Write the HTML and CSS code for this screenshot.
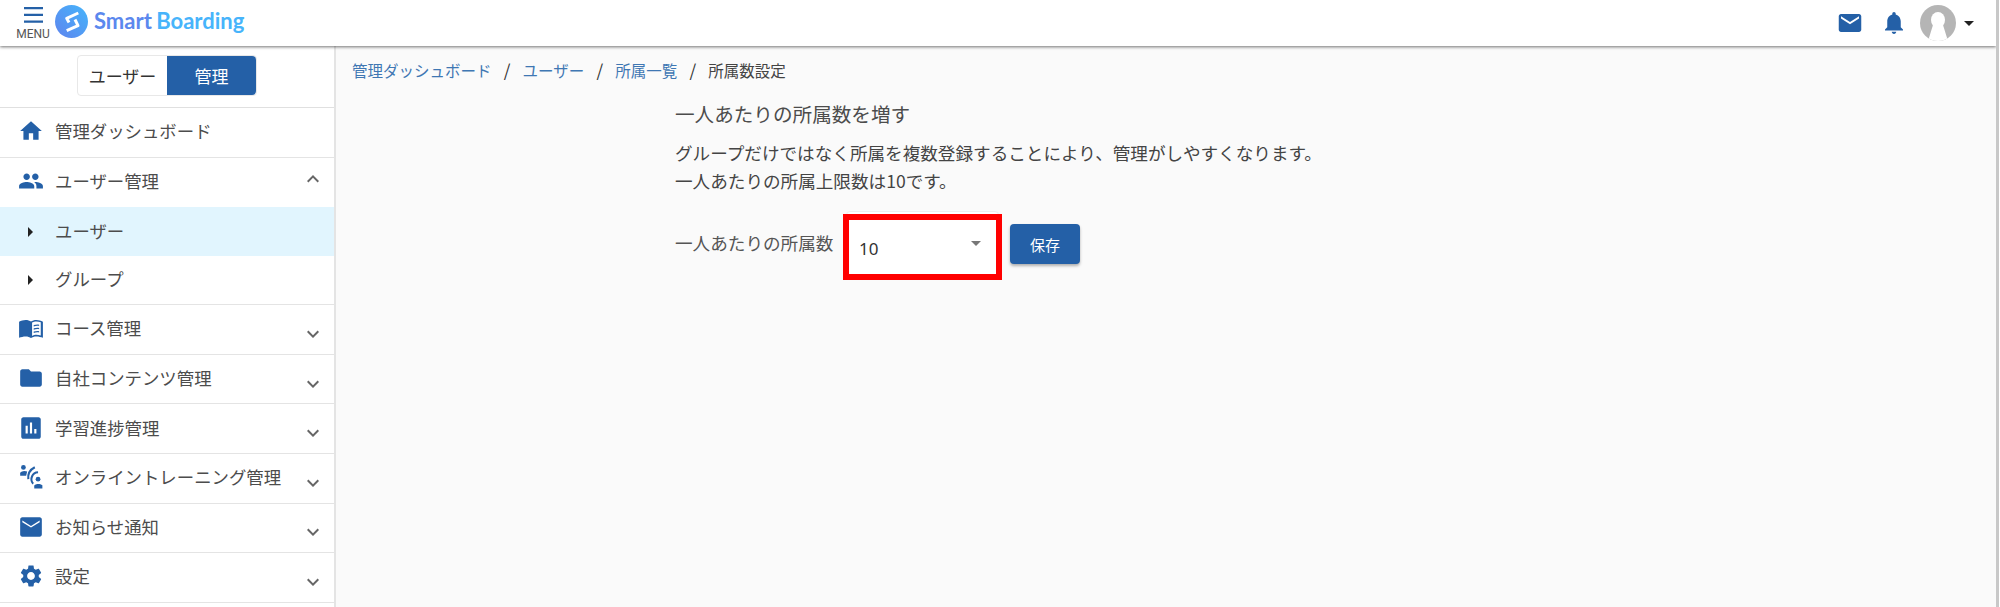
FILE: index.html
```html
<!DOCTYPE html>
<html lang="ja">
<head>
<meta charset="utf-8">
<title>所属数設定</title>
<link rel="stylesheet" href="styles.css">
</head>
<body>
<header class="topbar">
  <div class="menu">
    <svg class="menu-icon" viewBox="0 0 19 16"><path d="M0 0h19v2.200H0zM0 6.800h19v2.200H0zM0 13.600h19v2.200H0z"/></svg>
    <span class="menu-label">MENU</span>
  </div>
  <svg class="logo-mark" viewBox="0 0 33 33">
    <defs><linearGradient id="lg" x1="0" y1="1" x2="1" y2="0"><stop offset="0" stop-color="#5f84ee"/><stop offset="1" stop-color="#45b5fb"/></linearGradient></defs>
    <circle cx="16.500" cy="16.500" r="16.500" fill="url(#lg)"/>
    <path d="M23.300 8 11.700 13.300 14 17.500M20 14.500 23 20.700 11.700 25.700" fill="none" stroke="#fff" stroke-width="3" stroke-linecap="butt" stroke-linejoin="round"/>
  </svg>
  <div class="logo-text"><span class="logo-a">Smart</span> <span class="logo-b">Boarding</span></div>
  <div class="top-actions">
    <svg class="top-mail" viewBox="2 4 20 16"><path d="M20 4H4c-1.100 0-1.990.9-1.990 2L2 18c0 1.100.9 2 2 2h16c1.100 0 2-.9 2-2V6c0-1.100-.9-2-2-2zm0 4l-8 5-8-5V6l8 5 8-5v2z"/></svg>
    <svg class="top-bell" viewBox="4 2.500 16 19.500"><path d="M12 22c1.100 0 2-.9 2-2h-4c0 1.100.89 2 2 2zm6-6v-5c0-3.070-1.640-5.640-4.500-6.320V4c0-.83-.67-1.500-1.500-1.500s-1.500.67-1.500 1.500v.68C7.630 5.360 6 7.920 6 11v5l-2 2v1h16v-1l-2-2z"/></svg>
    <svg class="avatar" viewBox="0 0 36 36">
      <defs><clipPath id="av"><circle cx="18" cy="18" r="18"/></clipPath></defs>
      <circle cx="18" cy="18" r="18" fill="#b5b5b5"/>
      <g clip-path="url(#av)" fill="#fff"><ellipse cx="18" cy="15" rx="7" ry="8"/><path d="M13 20c-2 6-3 10-5 16h20c-2-6-3-10-5-16z"/></g>
    </svg>
    <span class="caret"></span>
  </div>
</header>
<div class="body-row">
  <aside class="sidebar">
    <div class="toggle-wrap">
      <div class="toggle"><span class="toggle-off">ユーザー</span><span class="toggle-on">管理</span></div>
    </div>
    <nav class="nav">
      <div class="row row-first">
        <svg class="ico" viewBox="0 0 24 24"><path d="M10 20v-6h4v6h5v-8h3L12 3 2 12h3v8z"/></svg>
        <span class="row-text">管理ダッシュボード</span>
      </div>
      <div class="row row-open">
        <svg class="ico" viewBox="0 0 24 24"><path d="M16 11c1.660 0 2.990-1.340 2.990-3S17.660 5 16 5c-1.660 0-3 1.340-3 3s1.340 3 3 3zm-8 0c1.660 0 2.990-1.340 2.990-3S9.660 5 8 5C6.340 5 5 6.340 5 8s1.340 3 3 3zm0 2c-2.330 0-7 1.170-7 3.500V19h14v-2.500c0-2.330-4.670-3.500-7-3.500zm8 0c-.29 0-.62.02-.97.05 1.160.84 1.970 1.970 1.970 3.450V19h6v-2.500c0-2.330-4.670-3.500-7-3.500z"/></svg>
        <span class="row-text">ユーザー管理</span>
        <svg class="chev chev-up" viewBox="0 0 24 24"><path d="M7.410 15.410 12 10.830l4.590 4.580L18 14l-6-6-6 6z"/></svg>
      </div>
      <div class="sub sub-active"><span class="tri"></span><span class="row-text">ユーザー</span></div>
      <div class="sub sub-last"><span class="tri"></span><span class="row-text">グループ</span></div>
      <div class="row">
        <svg class="ico" viewBox="0 0 24 24"><path d="M23 6.200c-1.600-1-4-1.700-6-1.700-2 0-3.900.5-5 1.500-1.100-1-3-1.500-5-1.500-2 0-4.400.7-6 1.700v14.900c1.700-.8 4-1.300 6-1.300 2 0 3.900.5 5 1.500 1.100-1 3-1.500 5-1.500 2 0 4.300.5 6 1.300z"/><path fill="#fff" d="M13 7c1-.7 2.600-1.100 4-1.100 1.400 0 2.800.2 4 .7V19c-1.200-.5-2.600-.7-4-.7-1.400 0-3 .4-4 1z"/><path d="M14.500 9.300c1.900-.7 3.900-.8 5-.4v1.300c-1.300-.4-3.200-.3-5 .4zm0 3c1.900-.7 3.900-.8 5-.4v1.300c-1.300-.4-3.200-.3-5 .4zm0 3c1.900-.7 3.900-.8 5-.4v1.300c-1.300-.4-3.200-.3-5 .4z"/></svg>
        <span class="row-text">コース管理</span>
        <svg class="chev chev-down" viewBox="0 0 24 24"><path d="M7.410 8.590 12 13.170l4.590-4.580L18 10l-6 6-6-6z"/></svg>
      </div>
      <div class="row">
        <svg class="ico" viewBox="0 0 24 24"><path d="M10 4H4c-1.100 0-1.990.9-1.990 2L2 18c0 1.100.9 2 2 2h16c1.100 0 2-.9 2-2V8c0-1.100-.9-2-2-2h-8l-2-2z"/></svg>
        <span class="row-text">自社コンテンツ管理</span>
        <svg class="chev chev-down" viewBox="0 0 24 24"><path d="M7.410 8.590 12 13.170l4.590-4.580L18 10l-6 6-6-6z"/></svg>
      </div>
      <div class="row">
        <svg class="ico" viewBox="0 0 24 24"><path d="M19 2H5c-1.100 0-2 .9-2 2v16c0 1.100.9 2 2 2h14c1.100 0 2-.9 2-2V4c0-1.100-.9-2-2-2zM9 17H7v-7h2v7zm4 0h-2V7h2v10zm4 0h-2v-4h2v4z"/></svg>
        <span class="row-text">学習進捗管理</span>
        <svg class="chev chev-down" viewBox="0 0 24 24"><path d="M7.410 8.590 12 13.170l4.590-4.580L18 10l-6 6-6-6z"/></svg>
      </div>
      <div class="row">
        <svg class="ico" viewBox="0 0 24 24"><circle cx="5" cy="3.200" r="2.200"/><path d="M2 10.800V8.500c0-1 2-2 4-2 .9 0 1.800.2 2.500.5l-1 3.800z"/><circle cx="18.500" cy="14" r="2.200"/><path d="M15 22.500v-1.800c-.5-1 1.500-2.200 3.500-2.200 1.500 0 3 .4 4 1.100v2.900z"/><path fill="none" stroke="#2460a7" stroke-width="1.900" d="M18.500 7.700A6.300 6.300 0 0 0 14 18.200M15.500 3A11 11 0 0 0 9.500 14"/></svg>
        <span class="row-text">オンライントレーニング管理</span>
        <svg class="chev chev-down" viewBox="0 0 24 24"><path d="M7.410 8.590 12 13.170l4.590-4.580L18 10l-6 6-6-6z"/></svg>
      </div>
      <div class="row">
        <svg class="ico" viewBox="0 0 24 24"><path d="M20 3H4c-1.100 0-1.990.9-1.990 2L2 19c0 1.100.9 2 2 2h16c1.100 0 2-.9 2-2V5c0-1.100-.9-2-2-2zm0 4.500-8 5-8-5V6l8 5 8-5z"/></svg>
        <span class="row-text">お知らせ通知</span>
        <svg class="chev chev-down" viewBox="0 0 24 24"><path d="M7.410 8.590 12 13.170l4.590-4.580L18 10l-6 6-6-6z"/></svg>
      </div>
      <div class="row">
        <svg class="ico" viewBox="0 0 24 24"><path d="M19.140 12.940c.04-.3.060-.61.060-.94 0-.32-.02-.64-.07-.94l2.030-1.580c.18-.14.23-.41.120-.61l-1.920-3.320c-.12-.22-.37-.29-.59-.22l-2.390.96c-.5-.38-1.030-.7-1.620-.94l-.36-2.540c-.04-.24-.24-.41-.48-.41h-3.840c-.24 0-.43.17-.47.41l-.36 2.540c-.59.24-1.130.57-1.620.94l-2.390-.96c-.22-.08-.47 0-.59.22L2.740 8.870c-.12.21-.08.47.12.61l2.030 1.580c-.05.3-.09.63-.09.94s.02.64.07.94l-2.030 1.580c-.18.14-.23.41-.12.61l1.920 3.320c.12.22.37.29.59.22l2.390-.96c.5.38 1.030.7 1.620.94l.36 2.540c.05.24.24.41.48.41h3.840c.24 0 .44-.17.47-.41l.36-2.540c.59-.24 1.130-.56 1.620-.94l2.390.96c.22.08.47 0 .59-.22l1.920-3.320c.12-.22.07-.47-.12-.61l-2.010-1.580zM12 15.600c-1.980 0-3.600-1.620-3.600-3.600s1.620-3.600 3.600-3.600 3.600 1.620 3.600 3.600-1.620 3.600-3.600 3.600z"/></svg>
        <span class="row-text">設定</span>
        <svg class="chev chev-down" viewBox="0 0 24 24"><path d="M7.410 8.590 12 13.170l4.590-4.580L18 10l-6 6-6-6z"/></svg>
      </div>
    </nav>
  </aside>
  <main class="main">
    <div class="crumbs">
      <a class="crumb-link">管理ダッシュボード</a><span class="crumb-sep">/</span>
      <a class="crumb-link">ユーザー</a><span class="crumb-sep">/</span>
      <a class="crumb-link">所属一覧</a><span class="crumb-sep">/</span>
      <span class="crumb-now">所属数設定</span>
    </div>
    <section class="panel">
      <h1 class="title">一人あたりの所属数を増す</h1>
      <p class="desc">グループだけではなく所属を複数登録することにより、管理がしやすくなります。<br>一人あたりの所属上限数は10です。</p>
      <div class="form-row">
        <span class="field-label">一人あたりの所属数</span>
        <div class="select"><span class="select-value">10</span><span class="select-arrow"></span><span class="annot"></span></div>
        <button class="save" type="button">保存</button>
      </div>
    </section>
  </main>
</div>
</body>
</html>
```
FILE: styles.css
```css
* { box-sizing: border-box; }
html { background: #fff; }
html, body { margin: 0; height: 607px; overflow: hidden; }
body {
  width: 1999px;
  border-right: 3px solid #c8c8c8;
  font-family: "Noto Sans CJK JP", "Noto Sans", sans-serif;
  font-size: 17.400px;
  color: #444;
  background: #fafafa;
  display: flex;
  flex-direction: column;
}
.topbar {
  height: 46px;
  flex: none;
  background: #fff;
  display: flex;
  align-items: center;
  padding: 0 22px 0 17px;
  box-shadow: 0 1px 3px rgba(0,0,0,.55);
  position: relative;
  z-index: 2;
}
.menu { width: 32px; display: flex; flex-direction: column; align-items: center; margin-top: 1px; }
.menu-icon { width: 19px; height: 16px; fill: #2460a7; }
.menu-label { font: 12px/13px "Roboto", sans-serif; color: #555; margin-top: 5px; }
.logo-mark { width: 33px; height: 33px; margin: 0 0 4px 6px; }
.logo-text { font: 700 22px/30px "Lato", sans-serif; margin-left: 6px; margin-bottom: 4px; white-space: nowrap; word-spacing: -1px; }
.logo-a { color: #5b88ee; }
.logo-b { color: #47b4fb; }
.top-actions { margin-left: auto; display: flex; align-items: center; }
.top-mail { width: 24px; height: 18px; fill: #2460a7; margin-right: 23px; }
.top-bell { width: 18px; height: 22px; fill: #2460a7; margin-right: 17px; }
.avatar { width: 36px; height: 36px; margin-right: 8px; }
.caret { width: 0; height: 0; border-left: 5.500px solid transparent; border-right: 5.500px solid transparent; border-top: 5.500px solid #222; }
.body-row { flex: 1; display: flex; min-height: 0; }
.sidebar { width: 336px; flex: none; background: #fff; border-right: 2px solid #e4e4e4; }
.toggle-wrap { height: 62px; padding-top: 9px; display: flex; justify-content: center; border-bottom: 1px solid #e0e0e0; }
.toggle { width: 180px; height: 41px; border: 1px solid #e8e8e8; border-radius: 4px; display: flex; font-size: 17px; }
.toggle-off { width: 89px; display: flex; align-items: center; justify-content: center; color: #333; }
.toggle-on { flex: 1; display: flex; align-items: center; justify-content: center; background: #2460a7; color: #fff; border-radius: 0 4px 4px 0; }
.row {
  height: 49.600px;
  display: flex;
  align-items: center;
  padding: 0 9px 0 18px;
  border-bottom: 1.500px solid #e4e4e4;
  position: relative;
}
.row-open { border-bottom: 0; }
.ico { width: 26px; height: 26px; fill: #2460a7; flex: none; margin-top: -2px; }
.row-text { margin-left: 11px; margin-top: -3px; color: #4c4c4c; white-space: nowrap; }
.chev { width: 24px; height: 24px; fill: #666; margin-left: auto; flex: none; }
.chev-up { margin-top: -6px; }
.chev-down { margin-top: 9px; }
.sub { height: 49px; display: flex; align-items: center; padding-left: 28px; }
.sub-active { background: #e1f5fe; }
.sub-last { border-bottom: 1.500px solid #e4e4e4; }
.tri { width: 0; height: 0; border-top: 5.500px solid transparent; border-bottom: 5.500px solid transparent; border-left: 5.500px solid #222; flex: none; }
.sub .row-text { margin-left: 22px; }
.main { flex: 1; min-width: 0; background: #fafafa; }
.crumbs { display: flex; align-items: center; padding: 13px 0 0 16px; font-size: 15.500px; line-height: 22px; }
.crumb-link { color: #3f77b3; }
.crumb-sep { width: 31px; text-align: center; color: #333; font-size: 17px; }
.crumb-now { color: #444; }
.panel { margin-left: 339px; margin-top: 20px; }
.title { font-size: 19.600px; font-weight: 400; line-height: 26px; margin: 0; color: #4c4c4c; }
.desc { margin: 12px 0 0; font-size: 17.600px; line-height: 28px; color: #444; }
.form-row { display: flex; align-items: flex-start; margin-top: 16px; }
.field-label { font-size: 17.600px; color: #555; margin-top: 20px; line-height: 24px; width: 171px; flex: none; }
.select { width: 153px; height: 66px; background: #fff; border: 1px solid #eee; border-radius: 4px 4px 0 0; position: relative; display: flex; align-items: center; padding-left: 12px; }
.select-value { font: 17px/24px "Noto Sans", sans-serif; color: #333; margin-top: 10px; }
.select-arrow { position: absolute; right: 17px; top: 29px; width: 0; height: 0; border-left: 5.500px solid transparent; border-right: 5.500px solid transparent; border-top: 5.500px solid #777; }
.annot { position: absolute; left: -4px; top: 2px; width: 159px; height: 66px; border: 6px solid #f00; }
.save { margin: 13px 0 0 11px; width: 70px; height: 40px; border: 0; border-radius: 4px; background: #2460a7; color: #fff; font: 15px "Noto Sans CJK JP", sans-serif; box-shadow: 0 2px 3px rgba(0,0,0,.3); }
```
